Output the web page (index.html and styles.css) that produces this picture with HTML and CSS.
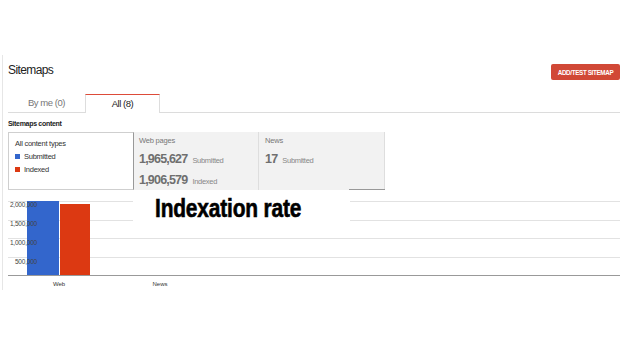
FILE: index.html
```html
<!DOCTYPE html>
<html lang="en">
<head>
  <meta charset="UTF-8">
  <meta name="viewport" content="width=device-width, initial-scale=1.0">
  <title>Sitemaps</title>
  <link rel="stylesheet" href="styles.css">
</head>
<body>

<div class="frame">
  <div class="header">
    <h1 class="title">Sitemaps</h1>
    <button class="add-btn">ADD/TEST SITEMAP</button>
  </div>

  <div class="tabs">
    <div class="tab">By me (0)</div>
    <div class="tab active">All (8)</div>
  </div>

  <div class="section-label">Sitemaps content</div>

  <div class="content-box">
    <div class="legend">
      <div class="legend-row">All content types</div>
      <div class="legend-row"><span class="swatch blue"></span>Submitted</div>
      <div class="legend-row"><span class="swatch red"></span>Indexed</div>
    </div>
    <div class="panel">
      <div class="panel-label">Web pages</div>
      <div class="stat"><b>1,965,627</b><span>Submitted</span></div>
      <div class="stat"><b>1,906,579</b><span>Indexed</span></div>
    </div>
    <div class="panel news">
      <div class="panel-label">News</div>
      <div class="stat"><b>17</b><span>Submitted</span></div>
    </div>
  </div>

  <div class="chart">
    <svg width="612" height="100" viewBox="0 0 612 100">
      <g class="grid">
        <line x1="0" y1="11.5" x2="612" y2="11.5"/>
        <line x1="0" y1="30.5" x2="612" y2="30.5"/>
        <line x1="0" y1="48.5" x2="612" y2="48.5"/>
        <line x1="0" y1="67.5" x2="612" y2="67.5"/>
      </g>
      <rect x="19" y="11" width="32" height="74" fill="#3366cc"/>
      <rect x="52" y="14" width="30" height="71" fill="#dc3912"/>
      <line class="axis" x1="0" y1="85.5" x2="612" y2="85.5"/>
      <g class="y-labels">
        <text x="29" y="17">2,000,000</text>
        <text x="29" y="36">1,500,000</text>
        <text x="29" y="55">1,000,000</text>
        <text x="29" y="74">500,000</text>
      </g>
      <g class="x-labels">
        <text x="51" y="95.5">Web</text>
        <text x="152" y="95.5">News</text>
      </g>
    </svg>
    <div class="chart-title"><span>Indexation rate</span></div>
  </div>
</div>

</body>
</html>
```

FILE: styles.css
```css
body {
  margin: 0;
  font-family: "Liberation Sans", Arial, sans-serif;
  color: #222;
  background: #fff;
}
.frame {
  margin: 55px 0 0 2px;
  border-left: 1px solid #e6e6e6;
  padding: 7px 18px 0 5px;
}
.header {
  display: flex;
  justify-content: space-between;
  align-items: flex-start;
  height: 16px;
}
.title {
  margin: 0;
  font-size: 12px;
  font-weight: normal;
  letter-spacing: -0.6px;
  line-height: 16px;
}
.add-btn {
  margin-top: 2px;
  width: 69px;
  height: 16px;
  padding: 0;
  border: none;
  border-radius: 2px;
  background-color: #d14836;
  color: #fff;
  font-family: inherit;
  font-size: 6.3px;
  font-weight: bold;
  letter-spacing: -0.35px;
}
.tabs {
  display: flex;
  margin-top: 16px;
  height: 18px;
  border-bottom: 1px solid #dcdcdc;
}
.tab {
  width: 77px;
  text-align: center;
  font-size: 9.5px;
  letter-spacing: -0.45px;
  line-height: 18px;
  color: #777;
}
.tab.active {
  box-sizing: border-box;
  width: 75px;
  height: 19px;
  border: 1px solid #ddd;
  border-top-color: #dd4b39;
  border-bottom: none;
  background: #fff;
  color: #222;
  line-height: 17px;
}
.section-label {
  margin-top: 6px;
  font-size: 7px;
  font-weight: bold;
  letter-spacing: -0.3px;
  line-height: 10px;
}
.content-box {
  display: flex;
  margin-top: 3px;
  height: 58px;
}
.legend {
  box-sizing: border-box;
  width: 126px;
  padding: 4px 0 0 6px;
  border: 1px solid #cfcfcf;
  border-right-color: #999;
  background: #fff;
}
.legend-row {
  display: flex;
  align-items: center;
  gap: 4px;
  font-size: 7.5px;
  letter-spacing: -0.25px;
  line-height: 13px;
  color: #333;
}
.swatch {
  width: 5px;
  height: 5px;
}
.swatch.blue {
  background: #3366cc;
}
.swatch.red {
  background: #dc3912;
}
.panel {
  box-sizing: border-box;
  width: 125px;
  padding: 3px 0 0 5px;
  background: #f2f2f2;
  border-right: 1px solid #dedede;
}
.panel.news {
  position: relative;
  width: 126px;
  padding-left: 6px;
}
.panel.news::after {
  content: "";
  position: absolute;
  right: -1px;
  bottom: 0;
  width: 36px;
  height: 1px;
  background: #999;
}
.panel-label {
  margin-bottom: 2px;
  font-size: 7.5px;
  letter-spacing: -0.2px;
  line-height: 12px;
  color: #777;
}
.stat {
  line-height: 18px;
  color: #777;
}
.stat b {
  font-size: 12.5px;
  letter-spacing: -0.8px;
  color: #6f6f6f;
}
.stat span {
  margin-left: 5px;
  font-size: 7.5px;
  letter-spacing: -0.3px;
  color: #888;
}
.chart {
  position: relative;
  height: 100px;
}
.chart svg {
  display: block;
  overflow: visible;
}
.grid line {
  stroke: #e2e2e2;
  stroke-width: 1;
}
.axis {
  stroke: #999;
  stroke-width: 1;
}
.y-labels text {
  font-size: 6.5px;
  letter-spacing: -0.2px;
  fill: #444;
  text-anchor: end;
}
.x-labels text {
  font-size: 6px;
  fill: #333;
  text-anchor: middle;
}
.chart-title {
  position: absolute;
  left: 125px;
  top: 5px;
  width: 217px;
  height: 26px;
  background: #fff;
}
.chart-title span {
  display: block;
  padding-left: 22px;
  color: #000;
  font-size: 25.5px;
  font-weight: bold;
  line-height: 26px;
  letter-spacing: -0.2px;
  white-space: nowrap;
  -webkit-text-stroke: 0.6px #000;
  transform: scaleX(0.82);
  transform-origin: 22px 0;
}
```
